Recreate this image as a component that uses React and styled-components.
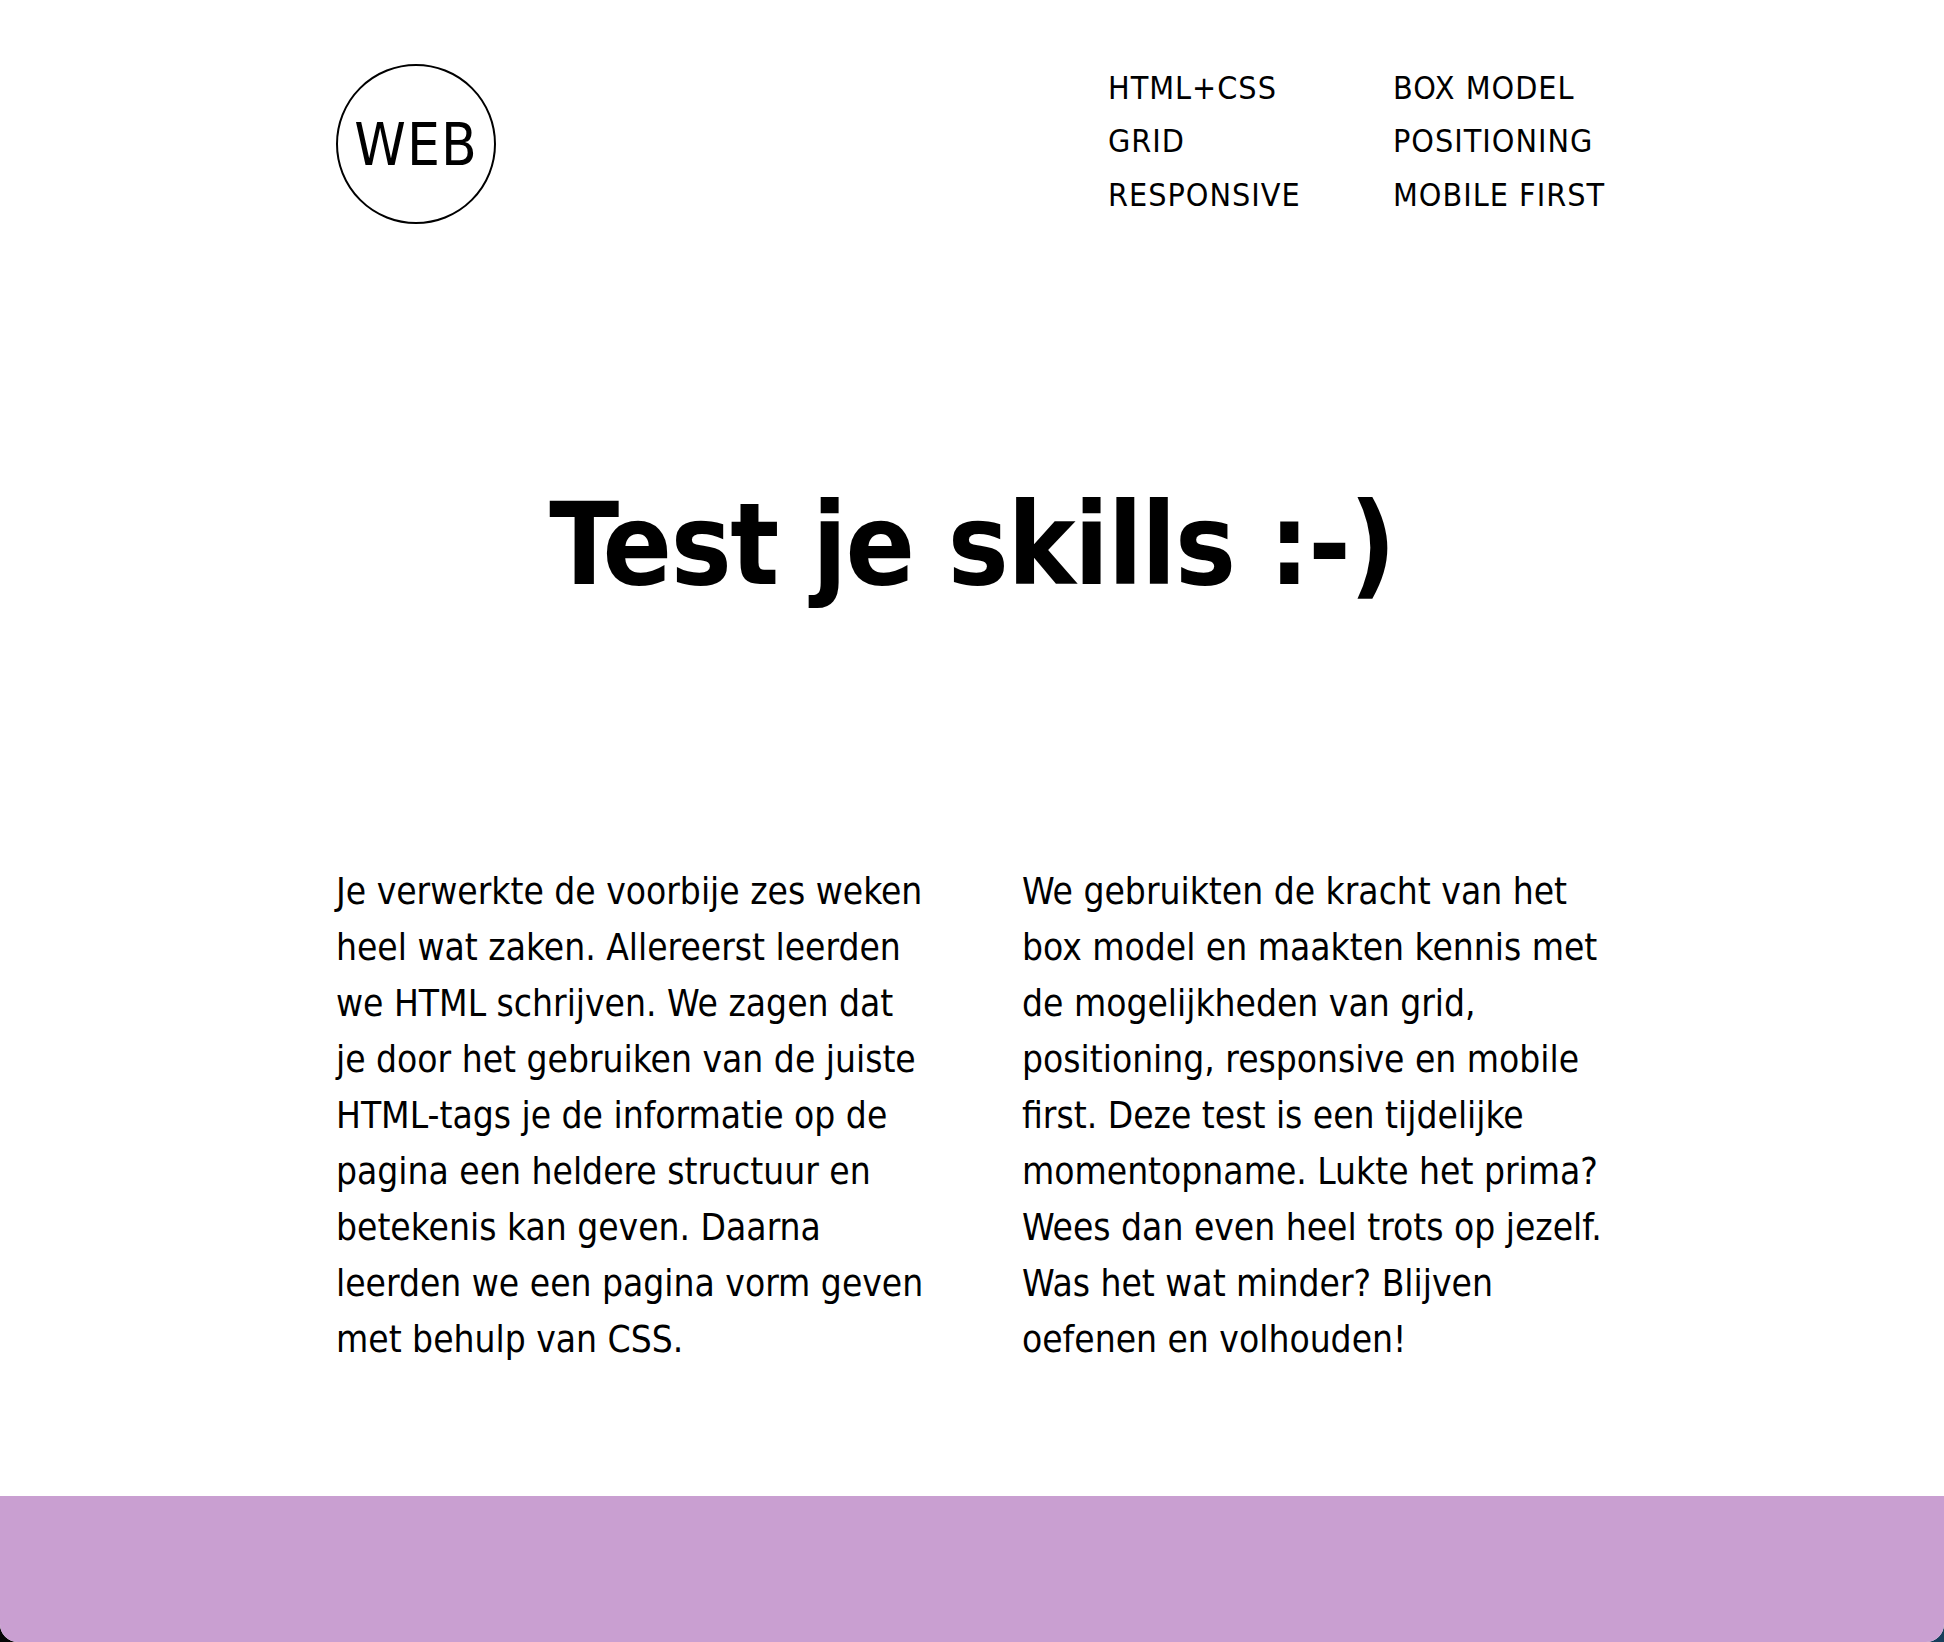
import React from 'react'
import styled, { createGlobalStyle } from 'styled-components'

const GlobalStyle = createGlobalStyle`
  html {
    background: linear-gradient(to right, #050505, #173e5c);
  }
  body {
    margin: 0;
    font-family: 'DejaVu Sans Condensed', 'Liberation Sans', sans-serif;
    color: #000;
  }
  * {
    box-sizing: border-box;
  }
`

const Page = styled.div`
  background: #fff;
  min-height: 1642px;
  display: flex;
  flex-direction: column;
  border-radius: 0 0 18px 18px;
  overflow: hidden;
`

const Header = styled.header`
  width: 1272px;
  margin: 0 auto;
  padding-top: 62px;
  display: flex;
  justify-content: space-between;
  align-items: flex-start;
`

const Logo = styled.div`
  width: 160px;
  height: 160px;
  margin-top: 2px;
  border: 2px solid #000;
  border-radius: 50%;
  display: flex;
  align-items: center;
  justify-content: center;
  font-size: 58px;
  letter-spacing: 1px;
  padding-top: 2px;
`

const Nav = styled.ul`
  list-style: none;
  margin: 0;
  padding: 0;
  display: grid;
  grid-template-columns: 285px 215px;
`

const NavItem = styled.li`
  font-size: 32px;
  line-height: 53.3px;
  letter-spacing: 1px;
  text-transform: uppercase;
  white-space: nowrap;
`

const Title = styled.h1`
  margin: 264px 0 0;
  text-align: center;
  font-size: 114px;
  line-height: 114px;
  font-weight: 700;
  letter-spacing: -1.5px;
`

const Columns = styled.section`
  width: 1272px;
  margin: 262px auto 0;
  display: grid;
  grid-template-columns: minmax(0, 1fr) minmax(0, 1fr);
  column-gap: 100px;
`

const Text = styled.p`
  margin: 0;
  font-size: 36.8px;
  line-height: 56px;
  white-space: nowrap;
`

const Footer = styled.footer`
  margin-top: auto;
  height: 146px;
  background: #c99fd1;
`

const navItems = [
  'HTML+CSS',
  'Box model',
  'Grid',
  'Positioning',
  'Responsive',
  'Mobile first',
]

const leftLines = [
  'Je verwerkte de voorbije zes weken',
  'heel wat zaken. Allereerst leerden',
  'we HTML schrijven. We zagen dat',
  'je door het gebruiken van de juiste',
  'HTML-tags je de informatie op de',
  'pagina een heldere structuur en',
  'betekenis kan geven. Daarna',
  'leerden we een pagina vorm geven',
  'met behulp van CSS.',
]

const rightLines = [
  'We gebruikten de kracht van het',
  'box model en maakten kennis met',
  'de mogelijkheden van grid,',
  'positioning, responsive en mobile',
  'first. Deze test is een tijdelijke',
  'momentopname. Lukte het prima?',
  'Wees dan even heel trots op jezelf.',
  'Was het wat minder? Blijven',
  'oefenen en volhouden!',
]

const Lines = ({ lines }) => (
  <Text>
    {lines.map((line, i) => (
      <React.Fragment key={i}>
        {line}
        {i < lines.length - 1 && <br />}
      </React.Fragment>
    ))}
  </Text>
)

const App = () => {
  return (
    <>
      <GlobalStyle />
      <Page>
        <Header>
          <Logo>WEB</Logo>
          <nav>
            <Nav>
              {navItems.map((item) => (
                <NavItem key={item}>{item}</NavItem>
              ))}
            </Nav>
          </nav>
        </Header>
        <main>
          <Title>Test je skills :-)</Title>
          <Columns>
            <Lines lines={leftLines} />
            <Lines lines={rightLines} />
          </Columns>
        </main>
        <Footer />
      </Page>
    </>
  )
}

export default App
